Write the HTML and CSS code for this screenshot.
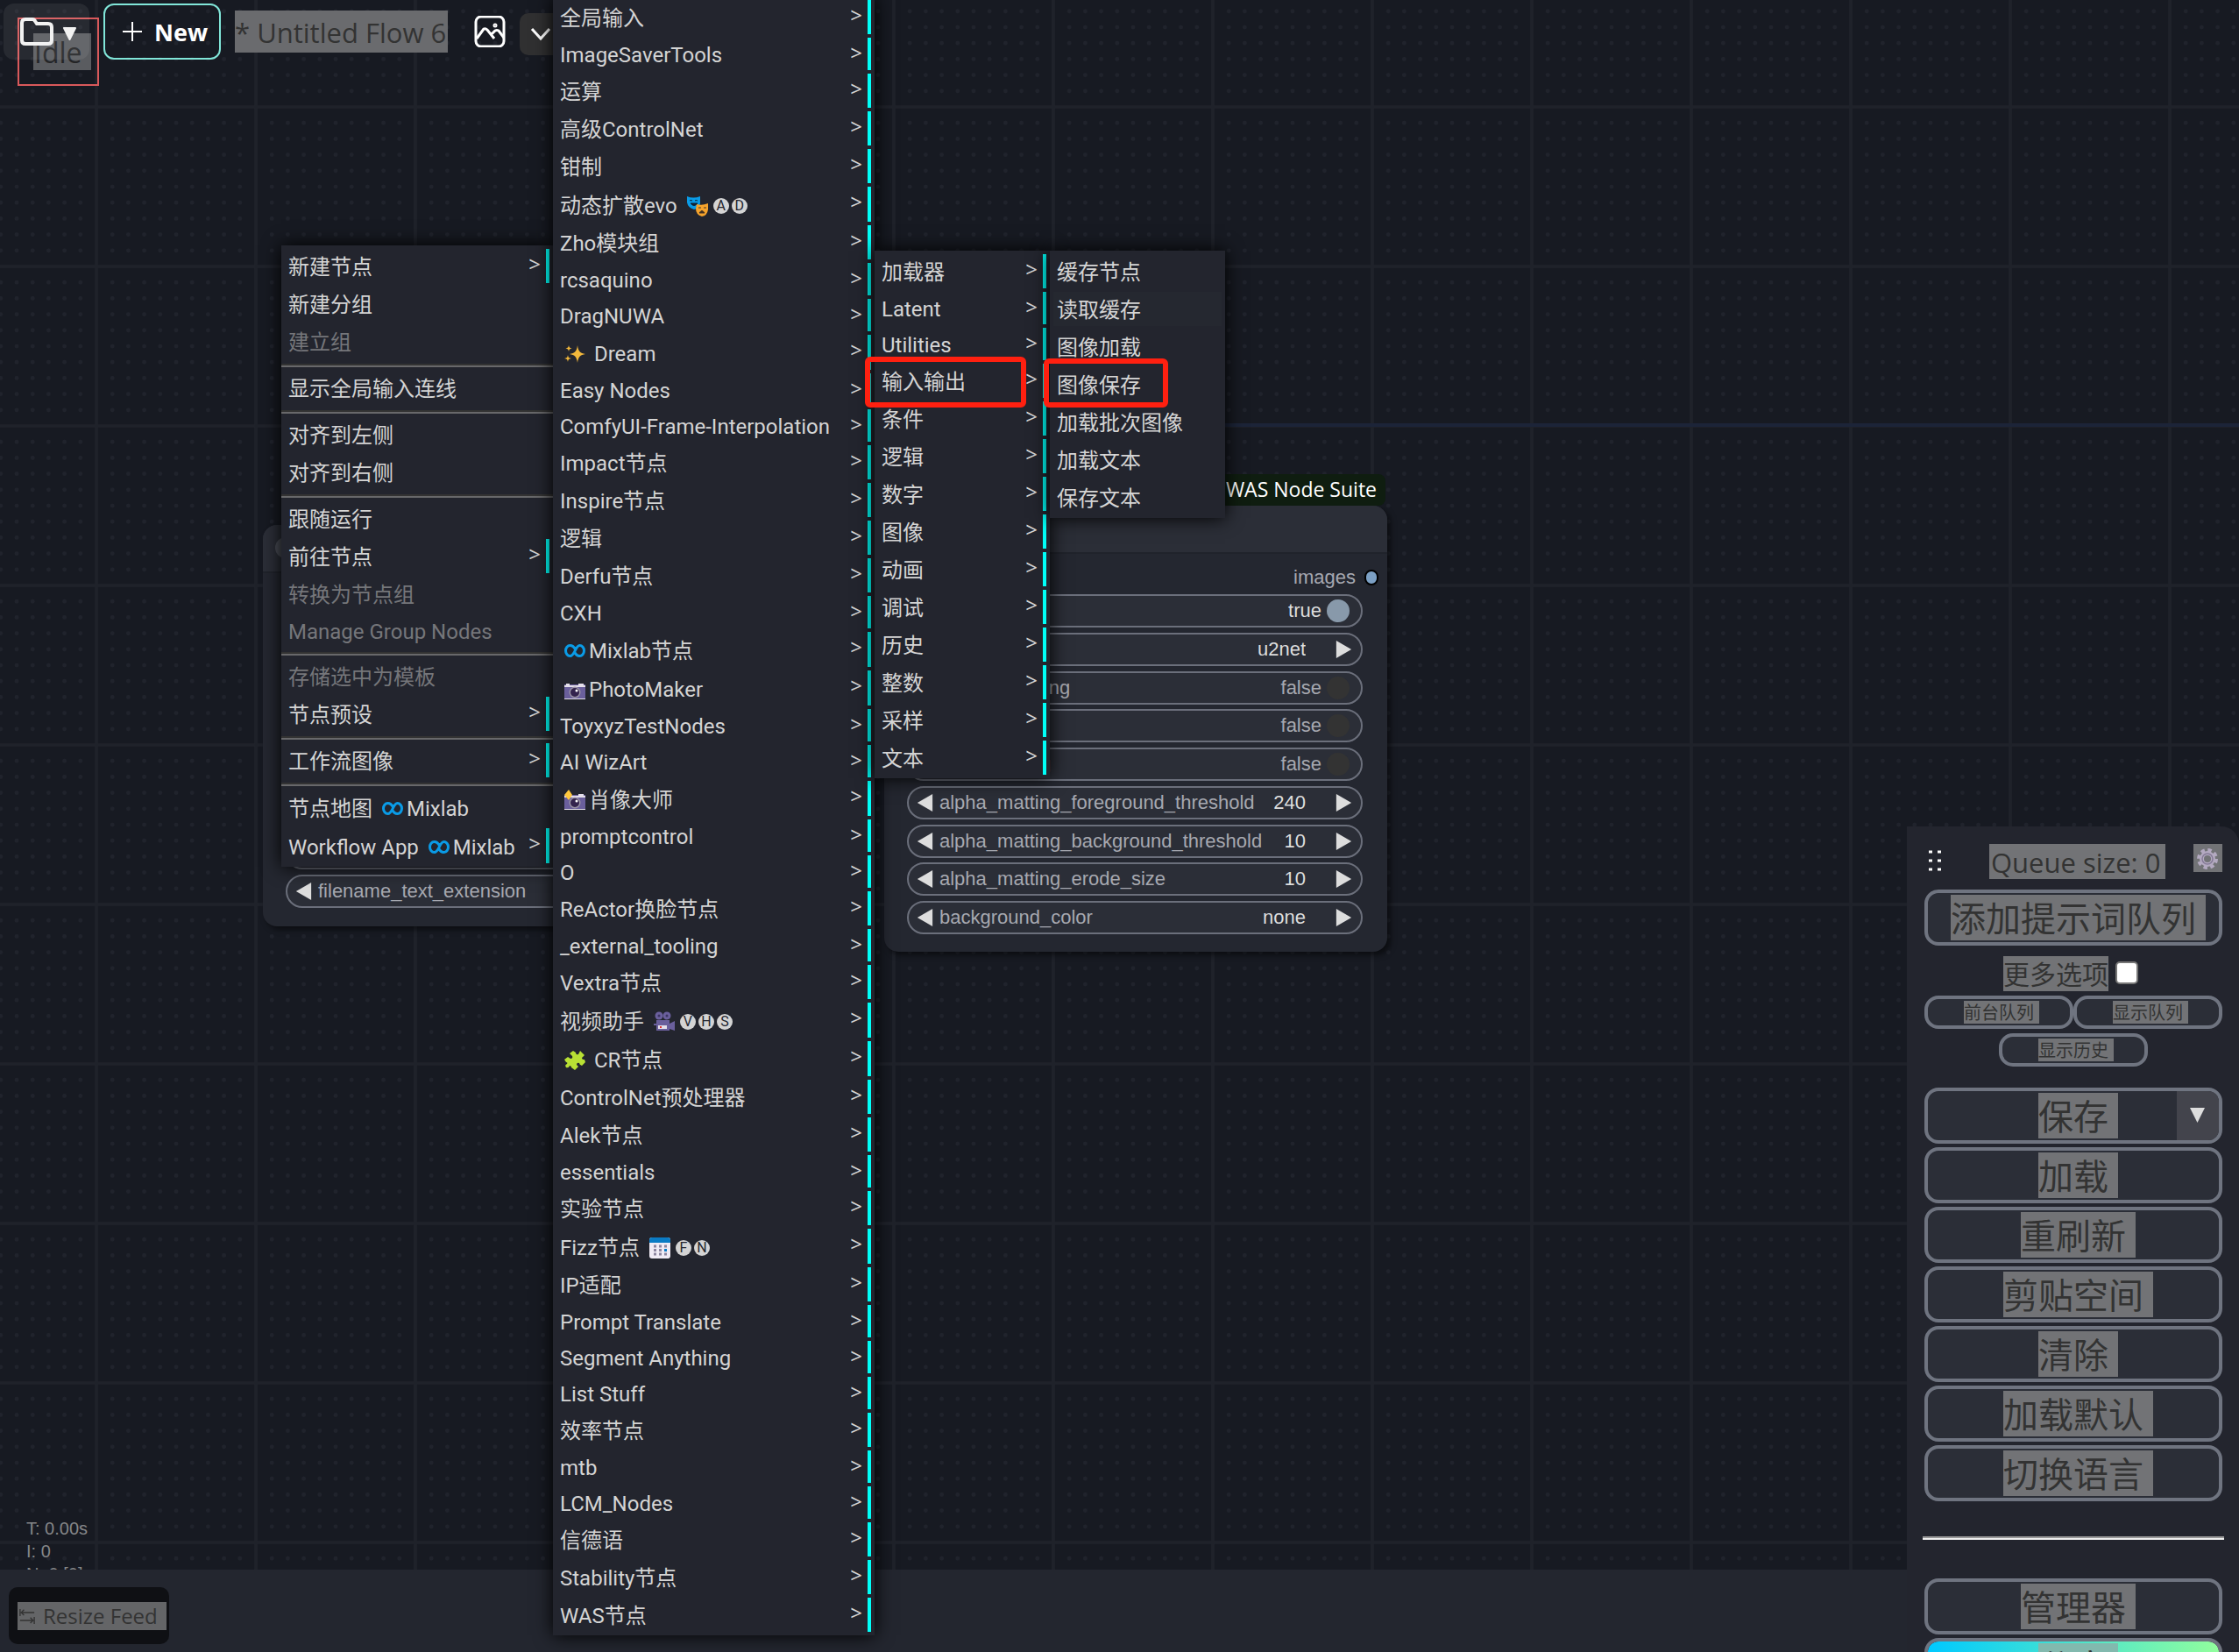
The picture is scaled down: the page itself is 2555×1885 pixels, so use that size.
FILE: index.html
```html
<!DOCTYPE html>
<html lang="zh-CN">
<head>
<meta charset="utf-8">
<title>ComfyUI</title>
<link rel="stylesheet" href="styles.css">
</head>
<body>
<svg class="defs" aria-hidden="true">
  <symbol id="mixlab" viewBox="0 0 24 24"><path d="M12.500 10C11 7 9 5.500 6.500 5.500a5 6 0 0 0 0 12c5.500 0 6-12 11-12a5 6 0 0 1 0 12c-2.500 0-4.500-1.500-6-4.500" fill="none" stroke="#0a9be6" stroke-width="3"/></symbol>
  <symbol id="sparkles" viewBox="0 0 24 24"><path d="M15 2c1 7 3 9 9 10c-6 1-8 3-9 10c-1-7-3-9-9-10c6-1 8-3 9-10zM5 2c.5 2.500 1 3 3.500 3.500C6 6 5.500 6.500 5 9C4.500 6.500 4 6 1.500 5.500C4 5 4.500 4.500 5 2zM4 13c.5 3 1 3.500 4 4c-3 .5-3.500 1-4 4c-.5-3-1-3.500-4-4c3-.5 3.500-1 4-4z" fill="#f2b83c"/></symbol>
  <symbol id="camera" viewBox="0 0 24 24"><path d="M2 5h4v1h10V5h6v1h2v17H0V6h2z" fill="#6a5f9c"/><path d="M0 7h2V5h4v2h10V5h6v2h2v2H0zM0 22h24v1H0z" fill="#e4dfea"/><circle cx="12" cy="15" r="6.500" fill="#9a93a5"/><circle cx="12" cy="15" r="5" fill="#33234d"/><circle cx="14" cy="13" r="1.500" fill="#fff"/></symbol>
  <symbol id="camera-flash" viewBox="0 0 24 24"><use href="#camera"/><path d="M5 0l4 6-4 6-5-6z" fill="#ffc83d"/></symbol>
  <symbol id="masks" viewBox="0 0 24 24"><path d="M0 1q7 3 15 0v8q-1 6-7 7Q1 14 0 8z" fill="#0a9be6"/><path d="M3 6q1-1 3 0M9 6q1-1 3 0M4 9q4 5 8 0z" stroke="#123" fill="#123"/><path d="M11 10q6 2 13-1v7q-1 7-7 8q-7-2-7-9z" fill="#f5a32c"/><path d="M13 14h3M19 14h3M14 20q3-5 6 0z" stroke="#432" fill="#432"/></symbol>
  <symbol id="movie" viewBox="0 0 24 24"><circle cx="6" cy="5" r="4.500" fill="#6a5f9c"/><circle cx="15" cy="5" r="4.500" fill="#6a5f9c"/><circle cx="6" cy="5" r="1.500" fill="#3b3360"/><circle cx="15" cy="5" r="1.500" fill="#3b3360"/><path d="M3 10h15v4l6-3v11l-6-2v2H3v-6H0v-2h3z" fill="#6a5f9c"/><path d="M5 16h10v4H5z" fill="#e4dfea"/><path d="M7 17h2v2H7z" fill="#d33"/></symbol>
  <symbol id="puzzle" viewBox="0 0 24 24"><path d="M6 4l4-3 3 2q0 3 3 2l2-4 5 5-3 3q0 2 3 2l1 3-4 4q-3-1-3-3-3-1-3 2l2 2-4 4-4-3q0-2-2-2-1 3-4 2-2-3 1-4 1-2-1-2L0 11l4-3 3 2q3 0 2-3z" fill="#b8e034"/></symbol>
  <symbol id="calendar" viewBox="0 0 24 24"><rect width="24" height="24" rx="3" fill="#f0ebf5"/><path d="M0 6V3q0-3 3-3h18q3 0 3 3v3z" fill="#0a7bc4"/><path d="M5 10h15M5 14.500h15M5 19h15" stroke="#8d86a0" stroke-width="3" stroke-dasharray="3 3"/><path d="M17 13h3v3h-3z" fill="#0a7bc4"/></symbol>
  <symbol id="prev" viewBox="0 0 19 22"><path d="M19 0v22L0 11z" fill="#ddd"/></symbol>
  <symbol id="next" viewBox="0 0 19 22"><path d="M0 0v22l19-11z" fill="#ddd"/></symbol>
</svg>

<main class="canvas">
  <svg class="grid" aria-hidden="true">
    <defs>
      <pattern id="cell" x="110" y="122" width="182" height="182" patternUnits="userSpaceOnUse" viewBox="0 0 100 100">
        <path d="M10 10h81M10 20h81M10 30h81M10 40h81M10 50h81M10 60h81M10 70h81M10 80h81M10 90h81" stroke="#20232c" stroke-width="2.600" stroke-linecap="round" stroke-dasharray="0 10"/>
        <path d="M0 0V100M100 0V100M0 0H100M0 100H100" stroke="#1f222a" stroke-width="2"/>
      </pattern>
    </defs>
    <rect width="100%" height="100%" fill="url(#cell)"/>
    <path d="M998 485H2555" stroke="#1c2438" stroke-width="4"/>
  </svg>

  <div class="stats"><div>T: 0.00s</div><div>I: 0</div><div>N: 0 [0]</div></div>

  <section class="node node-save">
    <header class="node-title"><i class="node-dot"></i></header>
    <div class="node-body">
      <div class="widget"></div>
      <div class="widget"><button class="step" aria-label="上一个"><svg><use href="#prev"/></svg></button><label for="ext">filename_text_extension</label><input id="ext" value="true" readonly><button class="step" aria-label="下一个"><svg><use href="#next"/></svg></button></div>
    </div>
  </section>

  <section class="node node-rembg">
    <span class="badge">WAS Node Suite</span>
    <header class="node-title"></header>
    <div class="node-body">
      <div class="slot">images<i></i></div>
      <div class="widgets">
        <div class="widget toggle on"><label for="w1">transparency</label><output>true</output><input type="checkbox" id="w1" checked></div>
        <div class="widget"><button class="step" aria-label="上一个"><svg><use href="#prev"/></svg></button><label for="w2">model</label><input id="w2" value="u2net"><button class="step" aria-label="下一个"><svg><use href="#next"/></svg></button></div>
        <div class="widget toggle"><label for="w3">post_processing</label><output>false</output><input type="checkbox" id="w3"></div>
        <div class="widget toggle"><label for="w4">only_mask</label><output>false</output><input type="checkbox" id="w4"></div>
        <div class="widget toggle"><label for="w5">alpha_matting</label><output>false</output><input type="checkbox" id="w5"></div>
        <div class="widget"><button class="step" aria-label="减少"><svg><use href="#prev"/></svg></button><label for="w6">alpha_matting_foreground_threshold</label><input id="w6" value="240"><button class="step" aria-label="增加"><svg><use href="#next"/></svg></button></div>
        <div class="widget"><button class="step" aria-label="减少"><svg><use href="#prev"/></svg></button><label for="w7">alpha_matting_background_threshold</label><input id="w7" value="10"><button class="step" aria-label="增加"><svg><use href="#next"/></svg></button></div>
        <div class="widget"><button class="step" aria-label="减少"><svg><use href="#prev"/></svg></button><label for="w8">alpha_matting_erode_size</label><input id="w8" value="10"><button class="step" aria-label="增加"><svg><use href="#next"/></svg></button></div>
        <div class="widget"><button class="step" aria-label="上一个"><svg><use href="#prev"/></svg></button><label for="w9">background_color</label><input id="w9" value="none"><button class="step" aria-label="下一个"><svg><use href="#next"/></svg></button></div>
      </div>
    </div>
  </section>
</main>

<footer class="feed">
  <button class="resize"><span class="mark"><svg viewBox="0 0 20 20"><path d="M1 1v9M2 5.500h17M6 2L2.500 5.500L6 9M19 11v9M18 15.500H1M14 12l3.500 3.500L14 19" fill="none" stroke="#333" stroke-width="1.500"/></svg>Resize Feed</span></button>
</footer>

<div class="idle"><span>Idle</span></div>
<nav class="topbar">
  <button class="folder" aria-label="工作流"><svg viewBox="0 0 64 32"><path d="M6 2h8q2 0 3 2l2 3h13q4 0 4 4v15q0 4-4 4H6q-4 0-4-4V6q0-4 4-4z" fill="none" stroke="#f2f2f2" stroke-width="4"/><path d="M50 12h13l-6.500 13z" fill="#f2f2f2" stroke="#f2f2f2" stroke-width="2" stroke-linejoin="round"/></svg></button>
  <button class="new"><svg viewBox="0 0 22 22"><path d="M11 0v22M0 11h22" stroke="#fff" stroke-width="2"/></svg>New</button>
  <input class="flow-name" value="* Untitled Flow 6" aria-label="名称">
  <button class="gallery" aria-label="图库"><svg viewBox="0 0 36 36"><rect x="2" y="1" width="32" height="34" rx="6"/><path d="M3 26l8-11q2-1 4 1l8 10M19 22l5-5q2-1 4 0l6 8"/><circle cx="24" cy="11" r="1"/></svg></button>
  <button class="more" aria-label="更多"><svg viewBox="0 0 24 16"><path d="M2 2l10 11L22 2" fill="none" stroke="#fff" stroke-width="3"/></svg></button>
</nav>

<aside class="panel">
  <div class="panel-head">
    <svg class="grip" viewBox="0 0 16 26"><path d="M1 3h4M11 3h4M1 13h4M11 13h4M1 23h4M11 23h4" stroke="#fff" stroke-width="3"/></svg>
    <span class="mark queue">Queue size: 0</span>
    <button class="gear" aria-label="设置"><svg viewBox="0 0 24 24"><circle cx="12" cy="12" r="10" fill="none" stroke="#b3a9c0" stroke-width="4" stroke-dasharray="4.400 3.454"/><circle cx="12" cy="12" r="6.500" fill="none" stroke="#b3a9c0" stroke-width="5"/><circle cx="12" cy="12" r="6" fill="none" stroke="#857b96" stroke-width="1.500"/></svg></button>
  </div>
  <button class="big"><span class="mark">添加提示词队列</span></button>
  <div class="options"><label for="opt" class="mark">更多选项</label><input type="checkbox" id="opt"></div>
  <div class="small-row"><button class="small"><span class="mark">前台队列</span></button><button class="small"><span class="mark">显示队列</span></button></div>
  <div class="small-row"><button class="small"><span class="mark">显示历史</span></button></div>
  <div class="actions">
    <div class="split"><button class="big"><span class="mark">保存</span></button><button class="drop" aria-label="保存选项"><svg viewBox="0 0 17 17"><path d="M0 0h17L8.500 17z" fill="#ddd"/></svg></button></div>
    <button class="big"><span class="mark">加载</span></button>
    <button class="big"><span class="mark">重刷新</span></button>
    <button class="big"><span class="mark">剪贴空间</span></button>
    <button class="big"><span class="mark">清除</span></button>
    <button class="big"><span class="mark">加载默认</span></button>
    <button class="big"><span class="mark">切换语言</span></button>
  </div>
  <hr>
  <div class="actions">
    <button class="big"><span class="mark">管理器</span></button>
    <button class="big share"><span class="mark">分享</span></button>
  </div>
</aside>

<div class="menu menu-root">
  <button class="item cjk sub">新建节点<b>&gt;</b></button>
  <button class="item cjk">新建分组</button>
  <button class="item cjk" disabled>建立组</button>
  <div class="sep"></div>
  <button class="item cjk">显示全局输入连线</button>
  <div class="sep"></div>
  <button class="item cjk">对齐到左侧</button>
  <button class="item cjk">对齐到右侧</button>
  <div class="sep"></div>
  <button class="item cjk">跟随运行</button>
  <button class="item cjk sub">前往节点<b>&gt;</b></button>
  <button class="item cjk" disabled>转换为节点组</button>
  <button class="item" disabled>Manage Group Nodes</button>
  <div class="sep"></div>
  <button class="item cjk" disabled>存储选中为模板</button>
  <button class="item cjk sub">节点预设<b>&gt;</b></button>
  <div class="sep"></div>
  <button class="item cjk sub">工作流图像<b>&gt;</b></button>
  <div class="sep"></div>
  <button class="item emo">节点地图 <svg><use href="#mixlab"/></svg>Mixlab</button>
  <button class="item emo sub">Workflow App <svg><use href="#mixlab"/></svg>Mixlab<b>&gt;</b></button>
</div>

<div class="menu menu-category">
  <button class="item cjk sub">全局输入<b>&gt;</b></button>
  <button class="item sub">ImageSaverTools<b>&gt;</b></button>
  <button class="item cjk sub">运算<b>&gt;</b></button>
  <button class="item cjk sub">高级ControlNet<b>&gt;</b></button>
  <button class="item cjk sub">钳制<b>&gt;</b></button>
  <button class="item emo sub">动态扩散evo <svg><use href="#masks"/></svg><i>A</i><i>D</i><b>&gt;</b></button>
  <button class="item cjk sub">Zho模块组<b>&gt;</b></button>
  <button class="item sub">rcsaquino<b>&gt;</b></button>
  <button class="item sub">DragNUWA<b>&gt;</b></button>
  <button class="item emo sub"><svg><use href="#sparkles"/></svg> Dream<b>&gt;</b></button>
  <button class="item sub">Easy Nodes<b>&gt;</b></button>
  <button class="item sub">ComfyUI-Frame-Interpolation<b>&gt;</b></button>
  <button class="item cjk sub">Impact节点<b>&gt;</b></button>
  <button class="item cjk sub">Inspire节点<b>&gt;</b></button>
  <button class="item cjk sub">逻辑<b>&gt;</b></button>
  <button class="item cjk sub">Derfu节点<b>&gt;</b></button>
  <button class="item sub">CXH<b>&gt;</b></button>
  <button class="item emo sub"><svg><use href="#mixlab"/></svg>Mixlab节点<b>&gt;</b></button>
  <button class="item emo sub"><svg><use href="#camera"/></svg>PhotoMaker<b>&gt;</b></button>
  <button class="item sub">ToyxyzTestNodes<b>&gt;</b></button>
  <button class="item sub">AI WizArt<b>&gt;</b></button>
  <button class="item emo sub"><svg><use href="#camera-flash"/></svg>肖像大师<b>&gt;</b></button>
  <button class="item sub">promptcontrol<b>&gt;</b></button>
  <button class="item sub">O<b>&gt;</b></button>
  <button class="item cjk sub">ReActor换脸节点<b>&gt;</b></button>
  <button class="item sub">_external_tooling<b>&gt;</b></button>
  <button class="item cjk sub">Vextra节点<b>&gt;</b></button>
  <button class="item emo sub">视频助手 <svg><use href="#movie"/></svg><i>V</i><i>H</i><i>S</i><b>&gt;</b></button>
  <button class="item emo sub"><svg><use href="#puzzle"/></svg> CR节点<b>&gt;</b></button>
  <button class="item cjk sub">ControlNet预处理器<b>&gt;</b></button>
  <button class="item cjk sub">Alek节点<b>&gt;</b></button>
  <button class="item sub">essentials<b>&gt;</b></button>
  <button class="item cjk sub">实验节点<b>&gt;</b></button>
  <button class="item emo sub">Fizz节点 <svg><use href="#calendar"/></svg><i>F</i><i>N</i><b>&gt;</b></button>
  <button class="item cjk sub">IP适配<b>&gt;</b></button>
  <button class="item sub">Prompt Translate<b>&gt;</b></button>
  <button class="item sub">Segment Anything<b>&gt;</b></button>
  <button class="item sub">List Stuff<b>&gt;</b></button>
  <button class="item cjk sub">效率节点<b>&gt;</b></button>
  <button class="item sub">mtb<b>&gt;</b></button>
  <button class="item sub">LCM_Nodes<b>&gt;</b></button>
  <button class="item cjk sub">信德语<b>&gt;</b></button>
  <button class="item cjk sub">Stability节点<b>&gt;</b></button>
  <button class="item cjk sub">WAS节点<b>&gt;</b></button>
</div>

<div class="menu menu-was">
  <button class="item cjk sub">加载器<b>&gt;</b></button>
  <button class="item sub">Latent<b>&gt;</b></button>
  <button class="item sub">Utilities<b>&gt;</b></button>
  <button class="item cjk sub">输入输出<b>&gt;</b></button>
  <button class="item cjk sub">条件<b>&gt;</b></button>
  <button class="item cjk sub">逻辑<b>&gt;</b></button>
  <button class="item cjk sub">数字<b>&gt;</b></button>
  <button class="item cjk sub">图像<b>&gt;</b></button>
  <button class="item cjk sub">动画<b>&gt;</b></button>
  <button class="item cjk sub">调试<b>&gt;</b></button>
  <button class="item cjk sub">历史<b>&gt;</b></button>
  <button class="item cjk sub">整数<b>&gt;</b></button>
  <button class="item cjk sub">采样<b>&gt;</b></button>
  <button class="item cjk sub">文本<b>&gt;</b></button>
</div>

<div class="menu menu-io">
  <button class="item cjk">缓存节点</button>
  <button class="item cjk hover">读取缓存</button>
  <button class="item cjk">图像加载</button>
  <button class="item cjk">图像保存</button>
  <button class="item cjk">加载批次图像</button>
  <button class="item cjk">加载文本</button>
  <button class="item cjk">保存文本</button>
</div>

<div class="callout callout-io"></div>
<div class="callout callout-save"></div>
</body>
</html>
```
FILE: styles.css
```css
* { box-sizing: border-box; }

body {
  margin: 0;
  height: 100vh;
  display: flex;
  flex-direction: column;
  position: relative;
  overflow: hidden;
  background: #23262f;
  font-family: "Open Sans", "Noto Sans CJK SC", sans-serif;
}

button, input, select, output { font: inherit; color: inherit; border: 0; padding: 0; margin: 0; background: none; }
.defs { position: absolute; width: 0; height: 0; }

/* canvas */
.canvas { flex: 1; position: relative; overflow: hidden; background: #171a22; }
.grid { display: block; width: 100%; height: 100%; }
.stats {
  position: absolute; left: 30px; bottom: -18px;
  font: 20px/26px "Liberation Sans", Arial, sans-serif; color: #858688;
}

/* nodes */
.node {
  position: absolute; border-radius: 16px; background: #242730;
  box-shadow: 4px 4px 6px rgba(0, 0, 0, .5);
  font: 22px/36px "Liberation Sans", Arial, sans-serif; color: #a6a8b0;
}
.node-save { left: 300px; top: 599px; width: 540px; height: 458px; }
.node-rembg { left: 1009px; top: 577px; width: 574px; height: 509px; }
.node-title {
  height: 55px; padding: 14px; border-radius: 16px 16px 0 0;
  background: #2b2e37; border-bottom: 2px solid #20232b;
}
.node-dot { display: block; width: 24px; height: 24px; border-radius: 12px; background: #4a4d56; }
.node-body { padding: 8px 28px 0 26px; }
.node-save .node-body { display: flex; flex-direction: column; gap: 6px; padding-top: 300px; }
.badge {
  position: absolute; right: 2px; bottom: 100%; height: 36px; padding: 0 10px;
  border-radius: 8px; background: #0f1d10; color: #fff; white-space: nowrap;
  font: 23px/34px "Open Sans", sans-serif;
}
.slot { display: flex; justify-content: flex-end; align-items: center; gap: 10px; margin-right: -18px; height: 38px; }
.slot i { width: 16px; height: 18px; border: 2px solid #000; border-radius: 9px; background: #7ca0c4; }
.widgets { display: flex; flex-direction: column; justify-content: space-between; height: 388px; }
.widget {
  display: flex; align-items: center; gap: 7px; height: 38px; padding: 0 10px 0 9px;
  border: 2px solid #6b6f7b; border-radius: 19px; background: #2b2e37;
}
.widget label { white-space: nowrap; }
.widget input { flex: 1; min-width: 0; text-align: right; color: #ddd; padding-right: 27px; }
.step { width: 19px; height: 20px; }
.step svg { display: block; width: 19px; height: 20px; }
.toggle { padding: 0 13px 0 24px; gap: 6px; }
.toggle label { flex: 1; }
.toggle.on output { color: #ddd; }
.toggle input {
  appearance: none; flex: none; width: 26px; height: 26px; padding: 0;
  border-radius: 13px; background: #333;
}
.toggle input:checked { background: #8899aa; }

/* footer */
.feed { height: 94px; padding: 20px 10px; }
.mark { background: #727376; color: #333; }
.resize { height: 65px; width: 183px; border-radius: 10px; background: #0f1014; font-size: 24px; display: flex; align-items: center; padding-left: 10px; }
.resize .mark { display: flex; align-items: center; gap: 9px; width: 170px; padding-left: 2px; height: 32px; background: #646567; white-space: nowrap; }
.resize svg { width: 18px; height: 20px; }

/* top bar */
.topbar { position: absolute; left: 4px; top: 4px; display: flex; align-items: center; height: 64px; }
.folder { width: 98px; height: 64px; padding-left: 19px; border-radius: 12px; background: rgba(255, 255, 255, .07); }
.folder svg { display: block; width: 64px; height: 32px; }
.new {
  display: flex; align-items: center; gap: 14px; width: 134px; height: 64px; margin-left: 16px; padding-left: 20px;
  border: 2px solid #81e6d9; border-radius: 12px; color: #fff; font-size: 27px; font-weight: 700;
}
.new svg { width: 22px; height: 22px; }
.flow-name { width: 243px; height: 48px; margin-left: 16px; padding-top: 2px; background: #6a6b6e; color: #333; font-size: 31px; }
.gallery { width: 36px; height: 36px; margin-left: 30px; }
.gallery svg { display: block; width: 36px; height: 36px; fill: none; stroke: #fff; stroke-width: 3; }
.more { width: 48px; height: 48px; margin: 6px 0 0 16px; padding: 0 12px; border-radius: 10px; background: #303031; }
.more svg { display: block; width: 24px; height: 16px; }
.idle { position: absolute; left: 20px; top: 20px; width: 93px; height: 78px; padding: 16px; border: 2px solid #d9595b; }
.idle span { display: block; width: 66px; height: 42px; padding-left: 1px; background: #5a5c60; color: #242527; font-size: 32px; line-height: 44px; }

/* side panel */
.panel {
  position: absolute; right: 0; top: 50%; width: 379px; min-height: 50%; padding: 20px 19px 0 20px;
  display: flex; flex-direction: column; background: #23252e; border-radius: 0 20px 0 0; font-size: 32px;
}
.panel-head { display: flex; justify-content: space-between; align-items: flex-start; height: 52px; }
.grip { width: 16px; height: 26px; margin: 6px 0 0 4px; }
.queue { width: 201px; height: 40px; margin-left: 22px; padding-left: 2px; font-size: 31px; line-height: 42px; white-space: nowrap; }
.gear { width: 33px; height: 32px; padding: 3px 4px 0; background: #727376; }
.gear svg { display: block; width: 24px; height: 24px; }
.big, .small { display: flex; align-items: center; justify-content: center; border: 4px solid #6f7480; background: #2b2e37; }
.big { width: 100%; height: 64px; border-radius: 16px; font-size: 40px; }
.big .mark { height: 52px; line-height: 54px; padding-right: 11px; margin-right: -11px; }
.small { width: 170px; height: 38px; border-radius: 16px; font-size: 20px; }
.small .mark { height: 26px; line-height: 28px; padding-right: 6px; margin-right: -6px; }
.options { display: flex; justify-content: center; align-items: flex-start; gap: 8px; margin-top: 12px; height: 45px; padding-right: 6px; font-size: 30px; }
.options .mark { height: 40px; line-height: 42px; }
.options input { appearance: none; width: 26px; height: 26px; margin-top: 6px; border: 2px solid #767676; border-radius: 5px; background: #fff; }
.small-row { display: flex; justify-content: center; margin-bottom: 5px; }
.actions { display: flex; flex-direction: column; gap: 4px; margin-top: 19px; }
.split { position: relative; }
.drop { position: absolute; right: 4px; top: 4px; width: 48px; height: 56px; padding-left: 15px; border-radius: 0 12px 12px 0; background: #43444c; }
.drop svg { display: block; width: 17px; height: 17px; }
.panel hr { width: 344px; height: 4px; margin: 40px -2px 25px; border: 0; border-top: 2px solid #999; background: #eee; }
.share { background: linear-gradient(90deg, #00c9ff, #92fe9d) padding-box; }
.share .mark { background: #82b9ae; }

/* context menus */
.menu {
  position: absolute; display: flex; flex-direction: column; gap: 4px; padding: 4px;
  background: #23252e; box-shadow: 0 0 20px #000;
  font-family: Roboto, "Noto Sans CJK SC", sans-serif; font-size: 24px; color: #d4d4d4;
}
.menu-root { left: 321px; top: 280px; width: 310px; }
.menu-category { left: 631px; top: -4px; width: 367px; }
.menu-was { left: 998px; top: 286px; width: 200px; }
.menu-io { left: 1198px; top: 286px; width: 200px; }
.item {
  display: flex; align-items: center; height: 37px; padding: 2px 6px 0 4px;
  text-align: left; white-space: pre; line-height: 32px;
}
.item.cjk { height: 39px; }
.item.emo { height: 40px; padding-top: 4px; }
.item.sub { border-right: 4px solid #00fff8; }
.item:disabled { color: #75767a; }
.item.hover { background: #252830; }
.item b { align-self: flex-start; margin-left: auto; font-family: "Noto Sans", sans-serif; font-weight: 400; line-height: 30px; }
.item.emo b { line-height: 26px; }
.item svg { flex: none; width: 24px; height: 24px; margin: 0 4px 0 5px; overflow: visible; }
.item i {
  width: 18px; height: 18px; margin: 0 1px 0 2px; border-radius: 9px; background: #d4d4d4; color: #23252e;
  font-size: 16px; font-style: normal; line-height: 18px; text-align: center;
}
.sep { height: 6px; margin: 0 -4px; border-top: 2px solid #23252e; border-bottom: 2px solid #68686a; background: #333; }

/* highlighted choices */
.callout { position: absolute; height: 58px; border: 6px solid #ff2010; border-radius: 6px; pointer-events: none; }
.callout-io { left: 987px; top: 407px; width: 184px; }
.callout-save { left: 1191px; top: 409px; width: 142px; height: 56px; }
```
